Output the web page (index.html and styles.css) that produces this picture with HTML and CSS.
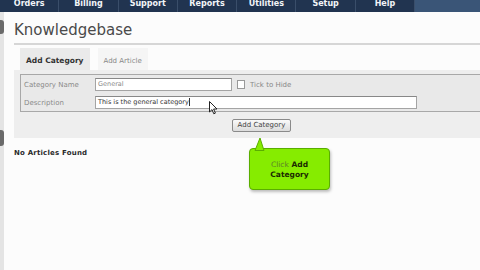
FILE: index.html
```html
<!DOCTYPE html>
<html lang="en">
<head>
  <meta charset="UTF-8">
  <title>Knowledgebase</title>
  <link rel="stylesheet" href="styles.css">
</head>
<body>

<div class="nav">
  <div class="nav-tab">Orders</div>
  <div class="nav-tab">Billing</div>
  <div class="nav-tab">Support</div>
  <div class="nav-tab">Reports</div>
  <div class="nav-tab">Utilities</div>
  <div class="nav-tab">Setup</div>
  <div class="nav-tab">Help</div>
  <div class="nav-fill"></div>
</div>

<div class="page">
  <div class="side">
    <div class="knob knob-top"></div>
    <div class="knob knob-mid"></div>
  </div>

  <div class="main">
    <h1 class="title">Knowledgebase</h1>

    <div class="tabs">
      <div class="tab active">Add Category</div>
      <div class="tab">Add Article</div>
    </div>

    <div class="panel">
      <div class="box">
        <div class="row">
          <label class="lbl">Category Name</label>
          <div class="input short">General</div>
          <span class="check"></span>
          <span class="check-lbl">Tick to Hide</span>
        </div>
        <div class="row">
          <label class="lbl">Description</label>
          <div class="input long dark">This is the general category<span class="caret"></span></div>
        </div>
      </div>
      <div class="btn">Add Category</div>
    </div>

    <p class="empty">No Articles Found</p>
  </div>
</div>

<div class="callout">
  <svg class="tail" width="14" height="14" viewBox="0 0 14 14">
    <polygon points="2,13.5 7,1 11,13.5" fill="#86ec00" stroke="#5aae00" stroke-width="1"/>
  </svg>
  <div class="callout-text"><span class="soft">Click</span> Add<br>Category</div>
</div>

<svg class="cursor" width="9" height="14" viewBox="0 0 9 14">
  <path d="M0.5 0.5 L0.5 11 L3 8.6 L4.8 12.8 L6.4 12.1 L4.6 8 L8 8 Z" fill="#fff" stroke="#222" stroke-width="1"/>
</svg>

</body>
</html>
```

FILE: styles.css
```css
* { box-sizing: border-box; }
body { margin:0; background:#fcfcfc; font-family:"DejaVu Sans", Verdana, sans-serif; color:#333; position:relative; height:270px; overflow:hidden; }

.nav { display:flex; height:12px; background:#3a5577; }
.nav-tab { width:59.3px; height:12px; line-height:7px; text-align:center; font-size:8px; font-weight:bold; color:#f2f4f8; background:#213450; border-right:1px solid #3a4e6a; }
.nav-fill { flex:1; }

.page { display:flex; height:258px; }
.side { width:4px; background:#e4e4e4; display:flex; flex-direction:column; }
.knob { width:4px; background:#6a6a6a; border-radius:0 3px 3px 0; }
.knob-top { margin-top:8px; height:14px; }
.knob-mid { margin-top:96px; height:16px; }

.main { flex:1; padding-left:10px; }
.title { margin:8px 0 0; font-size:15px; line-height:20px; font-weight:normal; color:#4a4a4a; padding-bottom:3px; border-bottom:2px solid #d6d6d6; }

.tabs { display:flex; gap:8px; margin:3px 0 0 6px; }
.tab { height:22px; padding:4px 6px 0; line-height:18px; font-size:7px; color:#888; background:#f5f5f5; }
.tab.active { font-size:7.5px; font-weight:bold; color:#333; background:#eaeaea; }

.panel { background:#eeeeee; padding:4px 0 6px 6px; }
.box { border:1px solid #a8a8a8; border-right:none; background:#e9e9e9; padding:3px 0 2px 3px; display:flex; flex-direction:column; gap:5px; }
.row { display:flex; align-items:center; height:13px; }
.lbl { width:71px; font-size:7px; color:#8a8a8a; }
.input { height:13px; border:1px solid #a4a4a4; border-top-color:#888; background:#fff; font-size:6.5px; line-height:11px; padding-left:2px; color:#888; }
.input.dark { color:#333; }
.short { width:137px; }
.long { width:322px; }
.caret { display:inline-block; width:1px; height:8px; background:#333; vertical-align:middle; }
.check { width:8px; height:9px; margin-left:5px; border:1px solid #999; background:#fff; }
.check-lbl { margin-left:5px; font-size:7px; color:#888; }

.btn { width:59px; height:13px; margin:7px 0 0 212px; border:1px solid #8a8a8a; border-radius:2px; background:linear-gradient(#fafafa, #dcdcdc); font-size:7px; line-height:11px; text-align:center; color:#444; }

.empty { margin:10px 0 0; font-size:7px; line-height:10px; font-weight:bold; color:#2a2a2a; letter-spacing:.2px; }

.callout { position:absolute; left:249px; top:148px; width:81px; height:42px; background:#86ec00; border:1px solid #5aae00; border-radius:4px; box-shadow:1px 2px 3px rgba(0,0,0,.25); display:flex; align-items:center; justify-content:center; }
.tail { position:absolute; left:3px; top:-12px; }
.callout-text { font-size:7.5px; line-height:10px; font-weight:bold; color:#1a2a00; text-align:center; margin-top:2px; }
.soft { font-weight:normal; color:#5c7f2a; }

.cursor { position:absolute; left:209px; top:101px; }
```
